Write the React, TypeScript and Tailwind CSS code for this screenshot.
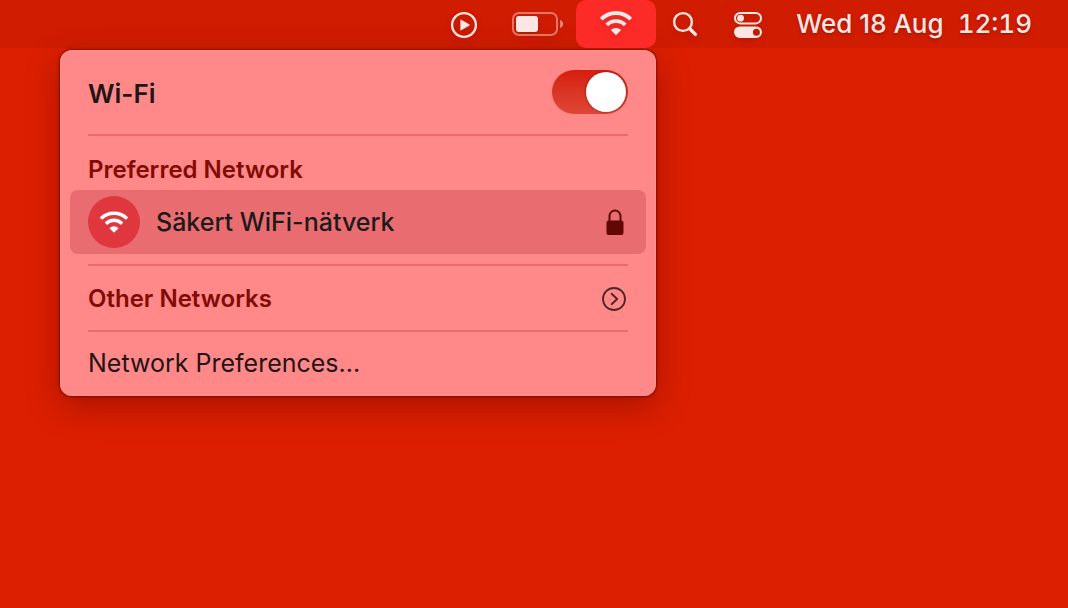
import { useState } from 'react';

function WifiIcon({ className }: { className?: string }) {
  return (
    <svg viewBox="0 0 34 26" className={className} fill="none" aria-hidden="true">
      <path d="M2.2 9.2a20.8 20.8 0 0 1 29.6 0" stroke="currentColor" strokeWidth="3.9" />
      <path d="M7.8 14.9a13 13 0 0 1 18.4 0" stroke="currentColor" strokeWidth="3.9" />
      <path d="M17 25.2l-5.2-5.1a7.3 7.3 0 0 1 10.4 0z" fill="currentColor" />
    </svg>
  );
}

function PlayIcon() {
  return (
    <svg viewBox="0 0 28 28" className="size-7" aria-hidden="true">
      <circle cx="14" cy="14" r="11.9" fill="none" stroke="currentColor" strokeWidth="2.3" />
      <path d="M10.4 9.2v9.6a.6.6 0 0 0 .9.5l8.2-4.8a.6.6 0 0 0 0-1l-8.2-4.8a.6.6 0 0 0-.9.5z" fill="currentColor" />
    </svg>
  );
}

function BatteryIcon() {
  return (
    <svg viewBox="0 0 52 24" className="h-6 w-[52px]" aria-hidden="true">
      <rect x="1" y="1" width="44" height="22" rx="6" fill="none" stroke="currentColor" strokeWidth="2" opacity="0.45" />
      <rect x="4" y="4" width="22" height="16" rx="3" fill="currentColor" />
      <path d="M48 8c2 .6 3.2 2 3.2 4s-1.2 3.4-3.2 4z" fill="currentColor" opacity="0.5" />
    </svg>
  );
}

function SearchIcon() {
  return (
    <svg viewBox="0 0 26 26" className="size-[26px]" fill="none" stroke="currentColor" aria-hidden="true">
      <circle cx="11" cy="11" r="8.9" strokeWidth="2.4" />
      <path d="M17.8 17.8l5.6 5.6" strokeWidth="3.4" strokeLinecap="round" />
    </svg>
  );
}

function ControlCenterIcon() {
  return (
    <svg viewBox="0 0 28 26" className="h-[26px] w-7" aria-hidden="true">
      <rect x="1" y="1" width="26" height="10.4" rx="5.2" fill="none" stroke="currentColor" strokeWidth="2" />
      <circle cx="6.6" cy="6.2" r="3.4" fill="currentColor" />
      <path fillRule="evenodd" d="M5.8 14.4h16.4a5.8 5.8 0 0 1 0 11.6H5.8a5.8 5.8 0 0 1 0-11.6zM22.4 16.7a3.5 3.5 0 1 0 0 7 3.5 3.5 0 0 0 0-7z" fill="currentColor" />
    </svg>
  );
}

function LockIcon() {
  return (
    <svg viewBox="0 0 18 26" className="h-[26px] w-[18px]" aria-label="Secured" role="img">
      <path d="M3.5 12V7a5.5 5.5 0 0 1 11 0V12" fill="none" stroke="currentColor" strokeWidth="2" />
      <rect x="0.5" y="11.5" width="17" height="14.5" rx="2" fill="currentColor" />
    </svg>
  );
}

function ChevronCircle() {
  return (
    <svg viewBox="0 0 24 24" className="size-6" fill="none" stroke="currentColor" aria-hidden="true">
      <circle cx="12" cy="12" r="11" strokeWidth="1.8" />
      <path d="M9.6 6.8l5.6 5.2-5.6 5.2" strokeWidth="1.9" strokeLinecap="round" strokeLinejoin="round" />
    </svg>
  );
}

function Divider() {
  return <hr className="mx-7 border-0 h-[2px] bg-[#ea6b6e]" />;
}

export default function App() {
  const [wifiOn, setWifiOn] = useState(true);

  return (
    <div className="min-h-screen bg-[#dc1f00] font-['Inter',sans-serif]">
      <header className="flex h-12 items-center justify-end bg-[#d01c00] pr-9 text-[#fbe6e4]">
        <button aria-label="Now playing" className="mr-[34px] pt-[2px] drop-shadow-md">
          <PlayIcon />
        </button>
        <button aria-label="Battery" className="mr-3 drop-shadow-md">
          <BatteryIcon />
        </button>
        <button aria-label="Wi-Fi menu" className="mr-4 flex h-12 w-20 items-center justify-center rounded-[10px] bg-[#fd2b28]">
          <WifiIcon className="mb-[2px] h-[26px] w-[34px] drop-shadow-md" />
        </button>
        <button aria-label="Search" className="mr-9 drop-shadow-md">
          <SearchIcon />
        </button>
        <button aria-label="Control Center" className="mr-[34px] pt-[2px] drop-shadow-md">
          <ControlCenterIcon />
        </button>
        <time className="flex gap-[14px] text-[26px] leading-8 font-medium text-shadow-md">
          <span>Wed 18 Aug</span>
          <span className="tabular-nums">12:19</span>
        </time>
      </header>

      <main className="mt-[2px] ml-15 max-w-[596px] rounded-xl bg-[#ff8889] text-[#231516] shadow-[inset_0_0_0_1px_rgba(255,160,160,0.5),0_0_2px_1px_rgba(90,0,0,0.6),0_10px_32px_rgba(90,0,0,0.4)]">
        <div className="flex h-[84px] items-center justify-between px-7">
          <label htmlFor="wifi" className="pt-[2px] text-[26px] font-semibold">Wi-Fi</label>
          <input
            id="wifi"
            type="checkbox"
            role="switch"
            checked={wifiOn}
            onChange={(e) => setWifiOn(e.target.checked)}
            className="h-11 w-[76px] appearance-none rounded-full bg-linear-to-b from-[#d51d0c] to-[#e04636] p-[2px] before:block before:size-10 before:rounded-full before:bg-white before:shadow-[0_0_3px_rgba(90,0,0,0.6)] checked:before:ml-8"
          />
        </div>
        <Divider />
        <h2 className="px-7 pt-4 pb-[2px] text-[24px] leading-9 font-semibold text-[#810b05]">Preferred Network</h2>
        <button className="mx-[10px] flex h-16 w-[calc(100%-20px)] items-center rounded-lg bg-[#e96d70] pr-[22px] pl-[18px]">
          <span className="flex size-[52px] items-center justify-center rounded-full bg-[#e0373f] text-white">
            <WifiIcon className="h-6 w-[30px]" />
          </span>
          <span className="ml-4 pt-[2px] text-[25px] font-medium text-[#1c1a1b]">Säkert WiFi-nätverk</span>
          <span className="ml-auto text-[#610704]">
            <LockIcon />
          </span>
        </button>
        <div className="pt-[10px]">
          <Divider />
        </div>
        <button className="flex h-16 w-full items-center justify-between pt-[2px] pr-[30px] pl-7">
          <span className="text-[24px] font-semibold text-[#810b05]">Other Networks</span>
          <span className="text-[#4f2527]">
            <ChevronCircle />
          </span>
        </button>
        <Divider />
        <a href="#network-preferences" className="flex h-16 items-center px-7 text-[25px]">Network Preferences...</a>
      </main>
    </div>
  );
}
